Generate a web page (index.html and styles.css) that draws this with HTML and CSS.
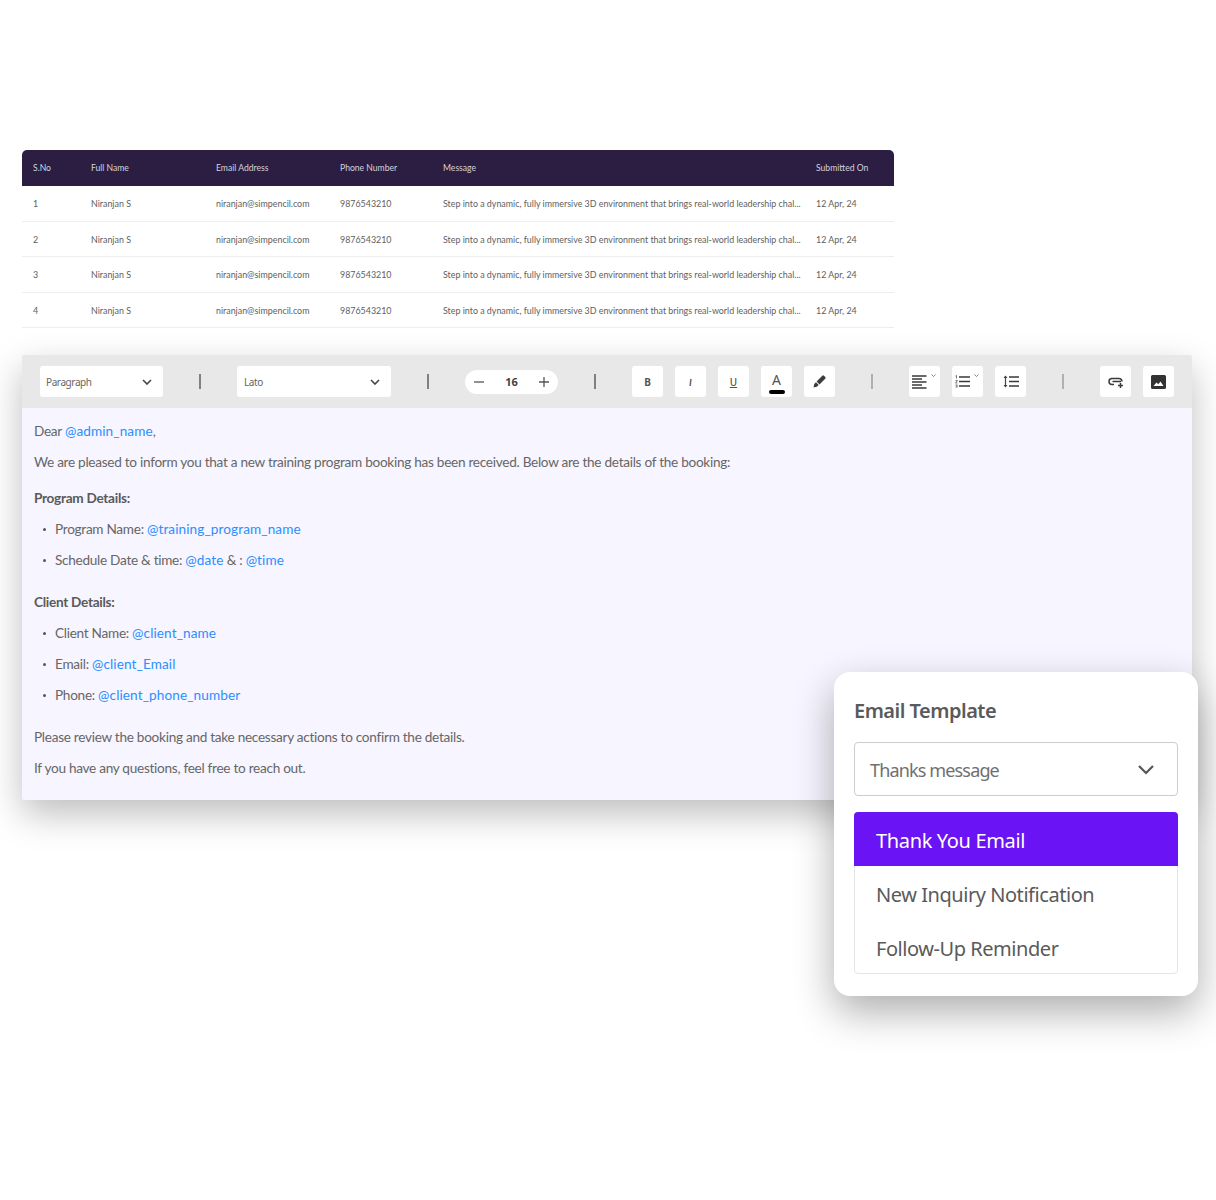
FILE: index.html

```html
<!DOCTYPE html>
<html lang="en">
<head>
  <meta charset="UTF-8" />
  <meta name="viewport" content="width=device-width, initial-scale=1.0" />
  <title>Email Template</title>
  <link rel="stylesheet" href="styles.css">
</head>
<body>
  <div class="page">

    <table class="inquiries">
      <thead>
        <tr>
          <th class="col-no">S.No</th>
          <th class="col-name">Full Name</th>
          <th class="col-email">Email Address</th>
          <th class="col-phone">Phone Number</th>
          <th class="col-msg">Message</th>
          <th>Submitted On</th>
        </tr>
      </thead>
      <tbody>
        <tr>
          <td>1</td><td>Niranjan S</td><td>niranjan@simpencil.com</td><td>9876543210</td>
          <td>Step into a dynamic, fully immersive 3D environment that brings real-world leadership chal...</td><td>12 Apr, 24</td>
        </tr>
        <tr>
          <td>2</td><td>Niranjan S</td><td>niranjan@simpencil.com</td><td>9876543210</td>
          <td>Step into a dynamic, fully immersive 3D environment that brings real-world leadership chal...</td><td>12 Apr, 24</td>
        </tr>
        <tr>
          <td>3</td><td>Niranjan S</td><td>niranjan@simpencil.com</td><td>9876543210</td>
          <td>Step into a dynamic, fully immersive 3D environment that brings real-world leadership chal...</td><td>12 Apr, 24</td>
        </tr>
        <tr>
          <td>4</td><td>Niranjan S</td><td>niranjan@simpencil.com</td><td>9876543210</td>
          <td>Step into a dynamic, fully immersive 3D environment that brings real-world leadership chal...</td><td>12 Apr, 24</td>
        </tr>
      </tbody>
    </table>

    <div class="editor">
      <div class="toolbar">
        <div class="select select-block">
          <span>Paragraph</span>
          <svg width="10" height="6" viewBox="0 0 10 6"><path d="M1 1l4 4 4-4" fill="none" stroke="#444" stroke-width="1.6"/></svg>
        </div>
        <div class="sep"></div>
        <div class="select select-font">
          <span>Lato</span>
          <svg width="10" height="6" viewBox="0 0 10 6"><path d="M1 1l4 4 4-4" fill="none" stroke="#444" stroke-width="1.6"/></svg>
        </div>
        <div class="sep"></div>
        <div class="size-pill">
          <svg width="10" height="10" viewBox="0 0 10 10"><path d="M0 5h10" stroke="#555" stroke-width="1.3"/></svg>
          <span>16</span>
          <svg width="10" height="10" viewBox="0 0 10 10"><path d="M0 5h10M5 0v10" stroke="#555" stroke-width="1.3"/></svg>
        </div>
        <div class="sep"></div>
        <div class="btn-group">
          <div class="btn"><b>B</b></div>
          <div class="btn"><b class="italic">I</b></div>
          <div class="btn"><span class="under">U</span></div>
          <div class="btn btn-color"><span>A</span><i class="color-bar"></i></div>
          <div class="btn">
            <svg width="13" height="13" viewBox="0 0 13 13"><path d="M9.300.8a1.200 1.200 0 011.700 0l1.200 1.200a1.200 1.200 0 010 1.700L6.500 9.400 3.600 6.500zM3 7.300l2.700 2.700-1.300 1.300c-.8.700-2.200.9-3.900 1 .4-1 .4-2.500 1-3.500z" fill="#3c3c3c"/></svg>
          </div>
        </div>
        <div class="sep sep-light"></div>
        <div class="btn-group">
          <div class="btn btn-drop">
            <svg width="15" height="14" viewBox="0 0 15 14"><path d="M0 1h14.500M0 4h10M0 7h14.500M0 10h10M0 13h14.500" stroke="#3a3a3a" stroke-width="1.500"/></svg>
            <svg class="mini" width="5" height="3" viewBox="0 0 5 3"><path d="M.5.5l2 2 2-2" fill="none" stroke="#666" stroke-width=".8"/></svg>
          </div>
          <div class="btn btn-drop">
            <svg width="15" height="13" viewBox="0 0 15 13"><path d="M4 2h11M4 6.500h11M4 11h11" stroke="#3a3a3a" stroke-width="1.500"/><path d="M.5 1L1.500.5V3.500M.5 5.500h2l-2 2.500h2M.5 10h2l-1 1 1 1H.5" fill="none" stroke="#444" stroke-width=".7"/></svg>
            <svg class="mini" width="5" height="3" viewBox="0 0 5 3"><path d="M.5.5l2 2 2-2" fill="none" stroke="#666" stroke-width=".8"/></svg>
          </div>
          <div class="btn">
            <svg width="16" height="13" viewBox="0 0 16 13"><path d="M6 2h10M6 6.500h10M6 11h10" stroke="#3a3a3a" stroke-width="1.500"/><path d="M2.500 1v11" stroke="#444" stroke-width="1.200"/><path d="M.5 3l2-2.500 2 2.500zM.5 10l2 2.500 2-2.500z" fill="#444"/></svg>
          </div>
        </div>
        <div class="sep sep-light"></div>
        <div class="btn-group">
          <div class="btn">
            <svg width="16" height="12" viewBox="0 0 16 12"><path d="M6 8.500H4a3 3 0 010-6h7a3 3 0 013 3M4.500 5.500H13" fill="none" stroke="#3a3a3a" stroke-width="1.500"/><path d="M12.500 7v5M10 9.500h5" stroke="#3a3a3a" stroke-width="1.500"/></svg>
          </div>
          <div class="btn">
            <svg width="15" height="14" viewBox="0 0 15 14"><path d="M1.500 0h12A1.500 1.500 0 0115 1.500v11a1.500 1.500 0 01-1.500 1.500h-12A1.500 1.500 0 010 12.500v-11A1.500 1.500 0 011.500 0zM2.500 11h10l-3-4.500-2.200 2.800L5.500 7.500z" fill="#333" fill-rule="evenodd"/></svg>
          </div>
        </div>
      </div>

      <div class="body-text">
        <p>Dear <a>@admin_name</a>,</p>
        <p>We are pleased to inform you that a new training program booking has been received. Below are the details of the booking:</p>
        <p class="heading">Program Details:</p>
        <ul>
          <li>Program Name:&nbsp;<a>@training_program_name</a></li>
          <li>Schedule Date &amp; time:&nbsp;<a>@date</a>&nbsp;&amp; :&nbsp;<a>@time</a></li>
        </ul>
        <p class="heading heading-2">Client Details:</p>
        <ul>
          <li>Client Name:&nbsp;<a>@client_name</a></li>
          <li>Email:&nbsp;<a>@client_Email</a></li>
          <li>Phone:&nbsp;<a>@client_phone_number</a></li>
        </ul>
        <p class="after-list">Please review the booking and take necessary actions to confirm the details.</p>
        <p>If you have any questions, feel free to reach out.</p>
      </div>
    </div>

    <div class="template-card">
      <h3>Email Template</h3>
      <div class="template-select">
        <span>Thanks message</span>
        <svg width="16" height="10" viewBox="0 0 16 10"><path d="M1 1l7 7 7-7" fill="none" stroke="#555" stroke-width="2.200"/></svg>
      </div>
      <div class="template-list">
        <div class="template-item active">Thank You Email</div>
        <div class="template-item">New Inquiry Notification</div>
        <div class="template-item">Follow-Up Reminder</div>
      </div>
    </div>

  </div>
</body>
</html>
```

FILE: styles.css

```css
body {
  margin: 0;
  background-color: #fff;
  font-family: "Noto Sans", sans-serif;
  color: #666;
}

.page {
  position: relative;
  height: 1200px;
  padding: 150px 24px 0 22px;
  box-sizing: border-box;
}

/* table */
.inquiries {
  width: 872px;
  border-collapse: separate;
  border-spacing: 0;
  table-layout: fixed;
  font-family: Lato, sans-serif;
  font-size: 8.9px;
}

.inquiries th {
  height: 36px;
  padding: 0 0 0 11px;
  box-sizing: border-box;
  background-color: #2c1e42;
  color: #d5d2db;
  font-size: 8.6px;
  font-weight: 400;
  text-align: left;
}

.inquiries th:first-child {
  border-top-left-radius: 5px;
}

.inquiries th:last-child {
  border-top-right-radius: 5px;
}

.col-no { width: 58px; }
.col-name { width: 125px; }
.col-email { width: 124px; }
.col-phone { width: 103px; }
.col-msg { width: 373px; }

.inquiries td {
  height: 35.5px;
  padding: 1px 0 0 11px;
  box-sizing: border-box;
  border-bottom: 1px solid #eee;
  color: #5e5e5e;
  white-space: nowrap;
  overflow: hidden;
}

/* editor */
.editor {
  margin-top: 27px;
  width: 1170px;
  border-radius: 2px;
  background-color: #f7f5ff;
  box-shadow: 0 14px 36px rgba(0, 0, 0, 0.26);
}

.toolbar {
  height: 53px;
  padding: 0 18px;
  display: flex;
  align-items: center;
  gap: 36px;
  background-color: #e8e8e8;
  border-radius: 2px 2px 0 0;
}

.sep {
  width: 2px;
  height: 15px;
  background-color: #808080;
}

.sep-light {
  background-color: #b0b0b0;
}

.select {
  height: 31px;
  box-sizing: border-box;
  padding: 0 11px 0 6px;
  display: flex;
  align-items: center;
  justify-content: space-between;
  background-color: #fff;
  border-radius: 3px;
  font-size: 10px;
  letter-spacing: -0.4px;
  color: #666;
}

.select-block { width: 123px; }
.select-font { width: 154px; padding-left: 7px; }

.size-pill {
  width: 93px;
  height: 24px;
  box-sizing: border-box;
  padding: 0 9px;
  display: flex;
  align-items: center;
  justify-content: space-between;
  background-color: #fff;
  border-radius: 12px;
  font-size: 11px;
  font-weight: 700;
  color: #444;
}

.btn-group {
  display: flex;
  gap: 12px;
}

.btn {
  position: relative;
  width: 31px;
  height: 31px;
  display: flex;
  align-items: center;
  justify-content: center;
  background-color: #fff;
  border-radius: 3px;
  font-size: 10px;
  color: #555;
}

.italic {
  font-family: Lato, sans-serif;
  font-style: italic;
}

.under {
  font-weight: 500;
  text-decoration: underline;
}

.btn-color {
  flex-direction: column;
  justify-content: flex-start;
  padding-top: 6px;
  box-sizing: border-box;
  font-size: 14px;
  line-height: 15px;
}

.color-bar {
  width: 16px;
  height: 3.5px;
  margin-top: 3px;
  border-radius: 2px;
  background-color: #000;
}

.btn-drop {
  justify-content: flex-start;
  padding-left: 3px;
  box-sizing: border-box;
}

.mini {
  position: absolute;
  top: 8px;
  right: 4px;
}

.body-text {
  padding: 13px 12px 21px;
  font-family: Lato, sans-serif;
  font-size: 13.6px;
  line-height: 21px;
  letter-spacing: -0.28px;
}

.body-text p {
  margin: 0 0 10px;
}

.body-text a {
  color: #2b8fff;
  letter-spacing: 0.1px;
}

.body-text .heading {
  margin-top: 15px;
  font-weight: 700;
  color: #5a5a5a;
}

.body-text .heading-2 {
  margin-top: 21px;
}

.body-text .after-list {
  margin-top: 21px;
}

.body-text ul {
  margin: 0;
  padding: 0 0 0 9px;
  list-style: none;
}

.body-text li {
  display: flex;
  align-items: center;
  margin-bottom: 10px;
}

.body-text li:last-child {
  margin-bottom: 0;
}

.body-text li::before {
  content: "";
  width: 3px;
  height: 3px;
  margin-right: 9px;
  border-radius: 50%;
  background-color: #555;
}

.body-text p:last-child {
  margin-bottom: 0;
}

/* floating card */
.template-card {
  position: absolute;
  left: 834px;
  top: 672px;
  width: 364px;
  height: 324px;
  box-sizing: border-box;
  padding: 20px;
  background-color: #fff;
  border-radius: 16px;
  box-shadow: 0 16px 40px rgba(0, 0, 0, 0.32);
}

.template-card h3 {
  margin: 0 0 12px;
  font-size: 20px;
  line-height: 38px;
  font-weight: 600;
  letter-spacing: -0.5px;
  color: #5a5a5a;
}

.template-select {
  height: 54px;
  box-sizing: border-box;
  padding: 1px 23px 0 15px;
  display: flex;
  align-items: center;
  justify-content: space-between;
  border: 1px solid #ccc;
  border-radius: 4px;
  font-size: 18px;
  letter-spacing: -0.85px;
  color: #707070;
}

.template-list {
  margin-top: 16px;
  height: 162px;
  box-sizing: border-box;
  border: 1px solid #e6e6e6;
  border-radius: 4px;
}

.template-item {
  height: 54px;
  padding: 2px 0 0 21px;
  box-sizing: border-box;
  display: flex;
  align-items: center;
  font-size: 20px;
  letter-spacing: -0.45px;
  color: #5a5a5a;
}

.template-item.active {
  margin: -1px -1px 0;
  padding-left: 22px;
  border-radius: 4px 4px 0 0;
  background-color: #6a13f4;
  color: #fff;
  letter-spacing: -0.35px;
}
```
